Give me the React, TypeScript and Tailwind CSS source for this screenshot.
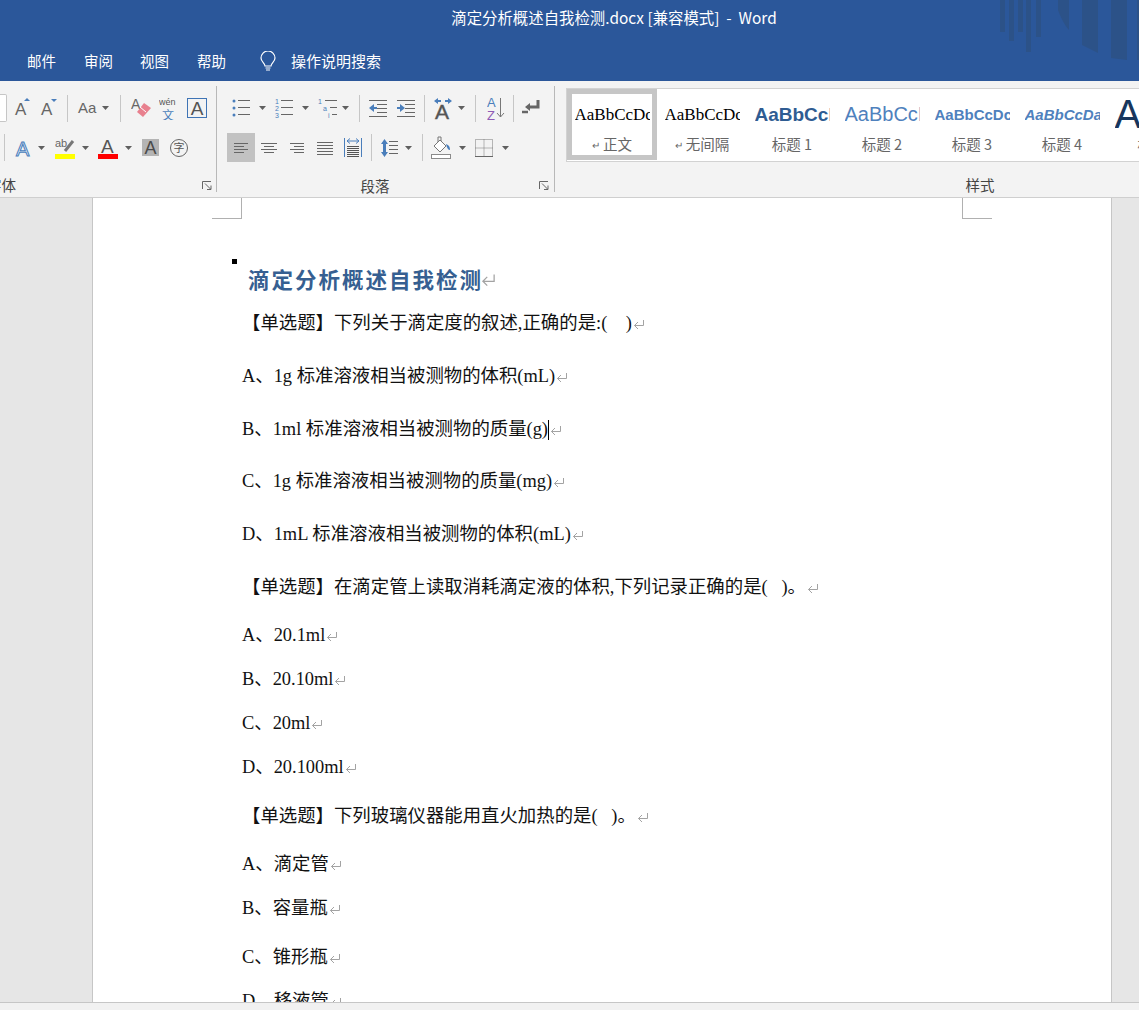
import type { ReactNode } from "react";

const CJK = "font-['Noto_Sans_CJK_SC','Liberation_Sans',sans-serif]";
const BLUE = "#4a7ebb";
const GREY = "#666666";

function Caret({ className = "" }: { className?: string }) {
  return (
    <svg width="7" height="4" viewBox="0 0 7 4" className={"shrink-0 " + className}>
      <path d="M0 0h7L3.5 4z" fill="#5f5f5f" />
    </svg>
  );
}

function Sep({ className = "" }: { className?: string }) {
  return <div className={"h-[27px] w-px shrink-0 bg-[#c6c6c6] " + className} />;
}

function Ico({ w, h = 24, className = "", children }: { w: number; h?: number; className?: string; children: ReactNode }) {
  return (
    <svg width={w} height={h} viewBox={"0 0 " + w + " " + h} className={"shrink-0 " + className}>
      {children}
    </svg>
  );
}

function Lines({ rows, color = GREY }: { rows: [number, number, number][]; color?: string }) {
  return (
    <>
      {rows.map(([x1, x2, y], i) => (
        <path key={i} d={"M" + x1 + " " + y + ".5H" + x2} stroke={color} strokeWidth="1" fill="none" />
      ))}
    </>
  );
}

function Launcher() {
  return (
    <svg width="10" height="9" viewBox="0 0 10 9" className="justify-self-end">
      <path d="M.5 8V.5H9M3 2.5l5.5 5.5M5 8.5h4V4.5" stroke="#666" fill="none" />
    </svg>
  );
}

function Return({ big = false }: { big?: boolean }) {
  return (
    <svg width={big ? 15 : 12} height={big ? 14 : 11} viewBox="0 0 12 11" className={"shrink-0 " + (big ? "-ml-[2px]" : "ml-px")}>
      <path d="M10.5 1v5.5H1.5M5 3L1.5 6.5 5 10" stroke="#a3a3a3" fill="none" />
    </svg>
  );
}

function FontGroup() {
  return (
    <div className="flex w-[216px] shrink-0 flex-col overflow-hidden pt-[13px]">
      <div className="flex h-[28px] items-center">
        <div className="h-[28px] w-[7px] shrink-0 rounded-r-[2px] border-y border-r border-[#c6c6c6] bg-white" />
        <Ico w={18} className="ml-[7px]">
          <text x="1" y="19" fontSize="17" fill={GREY} fontFamily="Liberation Sans">A</text>
          <path d="M10 3h6l-3-3z" transform="translate(0 2)" fill={BLUE} />
        </Ico>
        <Ico w={18} className="ml-[8px]">
          <text x="1" y="19" fontSize="17" fill={GREY} fontFamily="Liberation Sans">A</text>
          <path d="M11 3h6l-3 3z" fill={BLUE} />
        </Ico>
        <Sep className="ml-[9px]" />
        <span className="ml-[10px] w-[20px] font-['Liberation_Sans',sans-serif] text-[15px] text-[#666]">Aa</span>
        <Caret className="ml-[4px]" />
        <Sep className="ml-[11px]" />
        <Ico w={20} className="ml-[10px]">
          <text x="0" y="13" fontSize="14" fill={GREY} fontFamily="Liberation Sans">A</text>
          <path d="M13 7l7 5-8 9-6-5z" fill="#e8808e" />
          <path d="M9 11l6 5" stroke="#fff" />
        </Ico>
        <Ico w={18} className="ml-[8px]">
          <text x="0" y="9" fontSize="9" fill="#555" fontFamily="Liberation Sans">wén</text>
          <text x="3" y="24" fontSize="12" fill={BLUE} fontFamily="Noto Sans CJK SC">文</text>
        </Ico>
        <div className="ml-[10px] flex h-[20px] w-[20px] shrink-0 items-center justify-center border border-[#3f74b5] font-['Liberation_Sans',sans-serif] text-[19px] leading-none text-[#555]">A</div>
      </div>
      <div className="mt-[11px] flex h-[29px] items-center">
        <Sep className="ml-[4px]" />
        <Ico w={18} className="ml-[10px]">
          <text x="1" y="20" fontSize="20" fill="#e9f1fa" stroke={BLUE} strokeWidth="1" fontFamily="Liberation Sans">A</text>
        </Ico>
        <Caret className="ml-[5px]" />
        <Ico w={20} className="ml-[10px]">
          <text x="0" y="11" fontSize="11" fill={GREY} fontFamily="Liberation Sans">ab</text>
          <path d="M10 15l8-10" stroke="#777" strokeWidth="3" />
          <rect x="0" y="18" width="20" height="5" fill="#ffff00" />
        </Ico>
        <Caret className="ml-[7px]" />
        <Ico w={20} className="ml-[9px]">
          <text x="3" y="17" fontSize="19" fill="#555" fontFamily="Liberation Sans">A</text>
          <rect x="0" y="18" width="20" height="5" fill="#ff0000" />
        </Ico>
        <Caret className="ml-[7px]" />
        <div className="ml-[10px] flex h-[17px] w-[17px] shrink-0 items-center justify-center bg-[#b4b4b4] font-['Liberation_Sans',sans-serif] text-[18px] leading-none text-[#4a4a4a]">A</div>
        <div className="ml-[11px] flex h-[18px] w-[18px] shrink-0 items-center justify-center rounded-full border border-[#666] text-[11px] leading-none text-[#555]">字</div>
      </div>
      <div className="mt-[13px] flex h-[20px] items-center text-[14.5px] text-[#444]">
        <span className="-ml-[13px] flex-1">字体</span>
        <span className="mr-[4px] flex"><Launcher /></span>
      </div>
    </div>
  );
}

function ParagraphGroup() {
  return (
    <div className="flex w-[337px] shrink-0 flex-col pt-[13px]">
      <div className="flex h-[28px] items-center">
        <Ico w={18} className="ml-[15px]">
          <circle cx="2" cy="5" r="1.5" fill={BLUE} />
          <circle cx="2" cy="12" r="1.5" fill={BLUE} />
          <circle cx="2" cy="19" r="1.5" fill={BLUE} />
          <Lines rows={[[6, 18, 4], [6, 18, 11], [6, 18, 18]]} />
        </Ico>
        <Caret className="ml-[9px]" />
        <Ico w={18} className="ml-[9px]">
          <text x="0" y="8" fontSize="7" fill={BLUE} fontFamily="Liberation Sans">1</text>
          <text x="0" y="15" fontSize="7" fill={BLUE} fontFamily="Liberation Sans">2</text>
          <text x="0" y="22" fontSize="7" fill={BLUE} fontFamily="Liberation Sans">3</text>
          <Lines rows={[[6, 18, 4], [6, 18, 11], [6, 18, 18]]} />
        </Ico>
        <Caret className="ml-[9px]" />
        <Ico w={20} className="ml-[9px]">
          <text x="0" y="8" fontSize="7" fill={BLUE} fontFamily="Liberation Sans">1</text>
          <text x="5" y="15" fontSize="7" fill={BLUE} fontFamily="Liberation Sans">a</text>
          <text x="10" y="22" fontSize="7" fill={BLUE} fontFamily="Liberation Sans">i</text>
          <Lines rows={[[7, 19, 4], [12, 19, 11], [14, 19, 18]]} />
        </Ico>
        <Caret className="ml-[4px]" />
        <Sep className="ml-[10px]" />
        <Ico w={18} className="ml-[9px]">
          <Lines rows={[[0, 18, 4], [8, 18, 8], [8, 18, 12], [8, 18, 16], [0, 18, 20]]} />
          <path d="M0 12l5-4v3h3v2H5v3z" fill={BLUE} />
        </Ico>
        <Ico w={18} className="ml-[10px]">
          <Lines rows={[[0, 18, 4], [8, 18, 8], [8, 18, 12], [8, 18, 16], [0, 18, 20]]} />
          <path d="M8 12L3 8v3H0v2h3v3z" fill={BLUE} />
        </Ico>
        <Sep className="ml-[9px]" />
        <Ico w={18} className="ml-[9px]">
          <text x="1" y="23" fontSize="21" fill="#555" stroke="#555" strokeWidth=".4" fontFamily="Liberation Sans">A</text>
          <path d="M0 5l4-3v2h3v2H4v2zM18 5l-4-3v2h-3v2h3v2z" fill={BLUE} />
        </Ico>
        <Caret className="ml-[6px]" />
        <Sep className="ml-[10px]" />
        <Ico w={18} className="ml-[11px]">
          <text x="0" y="11" fontSize="13" fill={BLUE} fontFamily="Liberation Sans">A</text>
          <text x="0" y="24" fontSize="13" fill="#8e5bb5" fontFamily="Liberation Sans">Z</text>
          <path d="M13.5 2v19M10 17l3.5 4 3.5-4" stroke="#777" fill="none" />
        </Ico>
        <Sep className="ml-[8px]" />
        <Ico w={18} className="ml-[8px]">
          <path d="M16 4v7H7" stroke="#666" strokeWidth="3" fill="none" />
          <path d="M8 7l-5 4 5 4z" fill="#666" />
          <path d="M0 16h6" stroke="#666" strokeWidth="2.5" />
        </Ico>
      </div>
      <div className="mt-[11px] flex h-[29px] items-center">
        <div className="ml-[10px] flex h-[29px] w-[28px] shrink-0 items-center justify-center bg-[#c2c2c2]">
          <Ico w={14} h={12}><Lines rows={[[0, 14, 1], [0, 10, 4], [0, 14, 7], [0, 10, 10]]} /></Ico>
        </div>
        <Ico w={16} h={12} className="ml-[6px]"><Lines rows={[[0, 16, 1], [3, 13, 4], [0, 16, 7], [3, 13, 10]]} /></Ico>
        <Ico w={14} h={12} className="ml-[13px]"><Lines rows={[[0, 14, 1], [4, 14, 4], [0, 14, 7], [4, 14, 10]]} /></Ico>
        <Ico w={16} h={14} className="ml-[13px]"><Lines rows={[[0, 16, 1], [0, 16, 4], [0, 16, 7], [0, 16, 10], [0, 16, 13]]} /></Ico>
        <Ico w={18} h={19} className="ml-[11px]">
          <path d="M.5 0v19M17.5 0v19" stroke={BLUE} />
          <path d="M3 3h12M3 3l3-2.5M3 3l3 2.5M15 3l-3-2.5M15 3l-3 2.5" stroke={BLUE} fill="none" />
          <Lines rows={[[3, 15, 8], [3, 15, 10], [3, 15, 12], [3, 15, 14], [3, 15, 16], [3, 15, 18]]} color="#555" />
        </Ico>
        <Sep className="ml-[9px]" />
        <Ico w={17} className="ml-[9px]">
          <path d="M3.5 3l3.5 5H5v8h2l-3.5 5L0 16h2V8H0z" fill={BLUE} />
          <Lines rows={[[8, 17, 5], [8, 17, 9], [8, 17, 13], [8, 17, 17]]} />
        </Ico>
        <Caret className="ml-[7px]" />
        <Sep className="ml-[10px]" />
        <Ico w={20} className="ml-[8px]">
          <path d="M3 10l6-6 6 6-6 6z" fill="#fff" stroke="#777" />
          <path d="M7 6V1h3v4" stroke="#777" fill="none" />
          <path d="M15 8c3 1 4 3 4 6-2 0-3-2-4-6z" fill={BLUE} />
          <rect x=".5" y="18.5" width="19" height="4" fill="#fff" stroke="#8a8a8a" />
        </Ico>
        <Caret className="ml-[8px]" />
        <Ico w={18} h={18} className="ml-[9px]">
          <path d="M.5.5h17v17H.5zM9 .5v17M.5 9h17" stroke="#777" strokeDasharray="1 1" fill="none" />
          <path d="M0 17.5h18" stroke="#666" fill="none" />
        </Ico>
        <Caret className="ml-[9px]" />
      </div>
      <div className="mt-[13px] grid h-[20px] grid-cols-[1fr_auto_1fr] items-center pr-[5px] text-[14.5px] text-[#444]">
        <span />
        <span className="pr-[16px]">段落</span>
        <Launcher />
      </div>
    </div>
  );
}

type StyleCell = { preview: string; label: string; cls: string; mark?: boolean; selected?: boolean };

const styleCells: StyleCell[] = [
  { preview: "AaBbCcDc", label: "正文", cls: "font-['Liberation_Serif',serif] text-[17px] text-black", mark: true, selected: true },
  { preview: "AaBbCcDc", label: "无间隔", cls: "font-['Liberation_Serif',serif] text-[17px] text-black", mark: true },
  { preview: "AaBbCcI", label: "标题 1", cls: "font-['Liberation_Sans',sans-serif] text-[19px] font-bold text-[#2f5c92]" },
  { preview: "AaBbCcI", label: "标题 2", cls: "font-['Liberation_Sans',sans-serif] text-[20px] text-[#4f81bd]" },
  { preview: "AaBbCcDc", label: "标题 3", cls: "font-['Liberation_Sans',sans-serif] text-[15px] font-bold text-[#4f81bd]" },
  { preview: "AaBbCcDa", label: "标题 4", cls: "font-['Liberation_Sans',sans-serif] text-[15px] font-bold italic text-[#4f81bd]" },
  { preview: "A", label: "标题", cls: "font-['Liberation_Sans',sans-serif] text-[40px] text-[#17365d]" },
];

function StylesGroup() {
  return (
    <div className="flex min-w-0 flex-1 flex-col overflow-hidden pt-[7px]">
      <div className="ml-[11px] flex h-[74px] border-y border-l border-[#d2d2d2] bg-white">
        {styleCells.map((s) => (
          <div key={s.label} className={"flex h-[71px] w-[90px] shrink-0 flex-col items-center border-[5px] " + (s.selected ? "border-[#c6c6c6]" : "border-transparent")}>
            <div className={"flex h-[40px] w-[75px] shrink-0 items-center overflow-hidden whitespace-nowrap leading-none " + s.cls}>{s.preview}</div>
            <div className="flex h-[20px] items-center text-[14.5px] whitespace-nowrap text-[#666]">
              {s.mark && <span className="mr-[3px] text-[10px]">↵</span>}
              {s.label}
            </div>
          </div>
        ))}
      </div>
      <div className="mt-[13px] h-[20px] w-[850px] shrink-0 text-center text-[14.5px] leading-[20px] text-[#444]">样式</div>
    </div>
  );
}

type Line = { text: string; mt: string; cursor?: boolean };

const lines: Line[] = [
  { text: "【单选题】下列关于滴定度的叙述,正确的是:(    )", mt: "mt-[13px]" },
  { text: "A、1g 标准溶液相当被测物的体积(mL)", mt: "mt-[23px]" },
  { text: "B、1ml 标准溶液相当被测物的质量(g)", mt: "mt-[23px]", cursor: true },
  { text: "C、1g 标准溶液相当被测物的质量(mg)", mt: "mt-[22px]" },
  { text: "D、1mL 标准溶液相当被测物的体积(mL)", mt: "mt-[23px]" },
  { text: "【单选题】在滴定管上读取消耗滴定液的体积,下列记录正确的是(   )。", mt: "mt-[23px]" },
  { text: "A、20.1ml", mt: "mt-[18px]" },
  { text: "B、20.10ml", mt: "mt-[14px]" },
  { text: "C、20ml", mt: "mt-[14px]" },
  { text: "D、20.100ml", mt: "mt-[14px]" },
  { text: "【单选题】下列玻璃仪器能用直火加热的是(   )。", mt: "mt-[19px]" },
  { text: "A、滴定管", mt: "mt-[18px]" },
  { text: "B、容量瓶", mt: "mt-[14px]" },
  { text: "C、锥形瓶", mt: "mt-[19px]" },
  { text: "D、移液管", mt: "mt-[14px]" },
];

function Page() {
  return (
    <div className="ml-[92px] h-full w-[1020px] overflow-hidden border-x border-[#c6c6c6] bg-white">
      <div className="flex justify-between pr-[119px] pl-[119px]">
        <div className="h-[21px] w-[30px] border-r border-b border-[#b0b0b0]" />
        <div className="h-[21px] w-[30px] border-b border-l border-[#b0b0b0]" />
      </div>
      <div className="mt-[39px] flex h-[44px] pl-[139px]">
        <span className="mt-px h-[5px] w-[5px] shrink-0 bg-black" />
        <div className="ml-[11px] flex h-[43px] items-center">
          <span className="text-[21.5px] font-bold tracking-[2px] whitespace-pre text-[#365f91]">滴定分析概述自我检测</span>
          <Return big />
        </div>
      </div>
      <div className="-mt-[6px]">
        {lines.map((l, i) => (
          <div key={i} className={"flex h-[30px] items-center pl-[149px] font-['Liberation_Serif','Noto_Sans_CJK_SC',serif] text-[18.4px] whitespace-pre text-[#111] " + l.mt}>
            <span>{l.text}</span>
            {l.cursor && <span className="h-[20px] w-px bg-black" />}
            <Return />
          </div>
        ))}
      </div>
    </div>
  );
}

export default function App() {
  return (
    <div className={"relative flex h-[1010px] w-[1139px] flex-col overflow-hidden bg-[#e6e6e6] " + CJK}>
      <div className="relative h-[81px] shrink-0 bg-[#2b579a] text-white">
        <svg width="139" height="62" viewBox="0 0 139 62" className="absolute top-0 right-0">
          <g fill="#2c5288">
            <rect x="0" width="5" height="32" />
            <rect x="9" width="5" height="41" />
            <rect x="18" width="5" height="32" />
            <rect x="26" width="5" height="52" />
            <rect x="36" width="5" height="37" />
            <path d="M58 0h11v30c-4-4-8-12-11-20z" />
            <path d="M82 0h16v53l-16-8z" />
            <path d="M111 0h16v60l-16-2z" />
            <rect x="137" width="2" height="60" />
          </g>
        </svg>
        <div className="relative flex h-[36px] items-center justify-center pl-[89px] text-[15.4px] whitespace-pre">滴定分析概述自我检测.docx [兼容模式]  -  Word</div>
        <div className="relative flex h-[45px] items-start pt-[13px] text-[14.5px] leading-[24px]">
          <span className="ml-[27px]">邮件</span>
          <span className="ml-[28px]">审阅</span>
          <span className="ml-[27px]">视图</span>
          <span className="ml-[28px]">帮助</span>
          <svg width="16" height="21" viewBox="0 0 16 21" className="mt-[2px] ml-[34px]">
            <path d="M5 15c0-3-4-4-4-8a7 7 0 0 1 14 0c0 4-4 5-4 8z" fill="none" stroke="#fff" strokeWidth="1.2" />
            <path d="M5.5 17h5M6 19h4" stroke="#fff" strokeWidth="1.2" />
          </svg>
          <span className="ml-[15px] text-[15px]">操作说明搜索</span>
        </div>
      </div>
      <div className="flex h-[117px] shrink-0 border-b border-[#cfcfcf] bg-[#f3f3f3]">
        <FontGroup />
        <div className="my-[5px] w-px shrink-0 bg-[#b8b8b8]" />
        <ParagraphGroup />
        <div className="my-[5px] w-px shrink-0 bg-[#b8b8b8]" />
        <StylesGroup />
      </div>
      <div className="min-h-0 flex-1">
        <Page />
      </div>
      <div className="h-[8px] shrink-0 border-t border-[#c6c6c6] bg-[#f1f1f1]" />
    </div>
  );
}
